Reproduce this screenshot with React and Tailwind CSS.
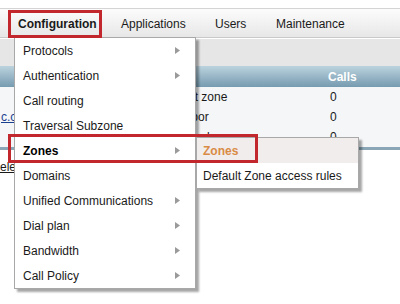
import React from 'react';

const items = [
  { label: 'Protocols', arrow: true },
  { label: 'Authentication', arrow: true },
  { label: 'Call routing' },
  { label: 'Traversal Subzone' },
  { label: 'Zones', arrow: true, bold: true },
  { label: 'Domains' },
  { label: 'Unified Communications', arrow: true },
  { label: 'Dial plan', arrow: true },
  { label: 'Bandwidth', arrow: true },
  { label: 'Call Policy', arrow: true },
];

const rows = [
  { host: '', name: 'Default zone', calls: '0' },
  { host: 'c.cisco.com', name: 'Neighbor', calls: '0' },
  { host: '', name: 'Traversal zone', calls: '0' },
];

function Arrow() {
  return (
    <svg width="5" height="7" viewBox="0 0 5 7" className="block">
      <path d="M0 0 L5 3.5 L0 7 Z" fill="#9a9a9a" />
    </svg>
  );
}

export default function App() {
  return (
    <div className="relative w-[400px] h-[304px] overflow-hidden bg-white text-[12px] text-[#1a1a1a]" style={{ fontFamily: '"Liberation Sans", Arial, sans-serif' }}>
      <div className="h-[8px] bg-white" />
      {/* nav bar */}
      <div className="h-[30px] flex items-center pt-[2px] border-t border-[#d4d4d4] border-b border-b-[#c9c9c9] bg-gradient-to-b from-[#fcfcfc] to-[#e7e7e7] pl-[18px]">
        <div className="w-[103px] font-bold">Configuration</div>
        <div className="w-[94px]">Applications</div>
        <div className="w-[61px]">Users</div>
        <div>Maintenance</div>
      </div>
      <div className="h-[1px] bg-white" />
      <div className="h-[27px] bg-[#e6e6e6]" />
      {/* table */}
      <div className="h-[21px] flex items-center bg-gradient-to-b from-[#bcd3de] to-[#769bb0] text-white font-bold">
        <div className="w-[328px]" />
        <div>Calls</div>
      </div>
      {rows.map((r, i) => (
        <div key={i} className="h-[20px] flex items-center bg-[#f4f6f8]">
          <div className="w-[160px] pl-[1px] overflow-hidden whitespace-nowrap">
            {r.host && <span className="text-[#1b3f8f] underline">{r.host}</span>}
          </div>
          <div className="w-[170px] whitespace-nowrap">{r.name}</div>
          <div>{r.calls}</div>
        </div>
      ))}
      <div className="h-[3px] bg-[#8aa6b6]" />
      <div className="h-[8px]" />
      <div className="whitespace-nowrap">
        <span className="-ml-[8px] underline">Select all</span>
      </div>

      {/* dropdown */}
      <div className="absolute left-[14px] top-[37px] w-[182px] bg-white border border-[#a8a8a8] shadow-[3px_3px_2px_rgba(0,0,0,0.35)]">
        {items.map((it) => (
          <div key={it.label} className="h-[25px] flex items-center justify-between pl-[8px] pr-[15px]">
            <span className={it.bold ? 'font-bold text-black' : ''}>{it.label}</span>
            {it.arrow && <Arrow />}
          </div>
        ))}
      </div>

      {/* submenu */}
      <div className="absolute left-[196px] top-[137px] w-[163px] bg-white border border-[#a8a8a8] shadow-[3px_3px_2px_rgba(0,0,0,0.35)]">
        <div className="h-[25px] flex items-center pl-[6px] bg-[#f1eded] font-bold text-[#d98b45]">Zones</div>
        <div className="h-[25px] flex items-center pl-[6px]">Default Zone access rules</div>
      </div>

      {/* annotation boxes */}
      <div className="absolute left-[8px] top-[10px] w-[94px] h-[28px] border-[3px] border-[#c1272d]" />
      <div className="absolute left-[8px] top-[134px] w-[250px] h-[29px] border-[3px] border-[#c1272d]" />
    </div>
  );
}
